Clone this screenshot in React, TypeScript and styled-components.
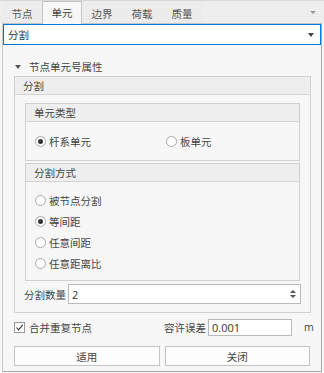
import React from "react";
import styled, { createGlobalStyle } from "styled-components";

const Global = createGlobalStyle`
  html, body { margin: 0; padding: 0; background: #f7f7f7; }
  * { box-sizing: border-box; }
  body { font-family: "Noto Sans CJK SC", "Microsoft YaHei", sans-serif; font-size: 10.5px; color: #444; }
`;

const Root = styled.div`
  width: 324px;
  height: 373px;
  display: flex;
  flex-direction: column;
  background: #f7f7f7;
`;

const TabBar = styled.div`
  height: 23px;
  display: flex;
  align-items: flex-end;
  padding: 0 2px;
  background: #eeeeee;
  border-top: 1px solid #d6d6d6;
  position: relative;
  z-index: 1;
`;

const Tab = styled.div<{ $active?: boolean }>`
  width: 40px;
  height: ${(p) => (p.$active ? "23px" : "21px")};
  display: flex;
  align-items: center;
  justify-content: center;
  color: ${(p) => (p.$active ? "#444" : "#555")};
  background: ${(p) => (p.$active ? "#f7f7f7" : "#ececec")};
  border: 1px solid ${(p) => (p.$active ? "#c4c4c4" : "transparent")};
  border-bottom: none;
  margin-bottom: ${(p) => (p.$active ? "-1px" : "0")};
  padding-bottom: ${(p) => (p.$active ? "2px" : "0")};
  margin-top: ${(p) => (p.$active ? "-2px" : "0")};
`;

const TabSpacer = styled.div`
  flex: 1;
`;

const TabMenu = styled.div`
  width: 14px;
  height: 21px;
  display: flex;
  align-items: center;
  justify-content: center;
  margin-right: 2px;
  &::after {
    content: "";
    border-left: 3px solid transparent;
    border-right: 3px solid transparent;
    border-top: 3px solid #9a9a9a;
  }
`;

const Panel = styled.div`
  flex: 1;
  margin: 0 2px 1px 2px;
  border: 1px solid #a9a9a9;
  border-top-color: #c4c4c4;
  border-left-color: #c8c8c8;
  display: flex;
  flex-direction: column;
`;

const Combo = styled.div`
  height: 21px;
  border: 1px solid #0078d7;
  background: #fff;
  display: flex;
  align-items: center;
  padding: 0 6px 0 4px;
  justify-content: space-between;
  color: #333;
`;

const DownArrow = styled.span`
  border-left: 3.5px solid transparent;
  border-right: 3.5px solid transparent;
  border-top: 4px solid #444;
`;

const SectionTitle = styled.div`
  height: 17px;
  margin-top: 13px;
  display: flex;
  align-items: center;
  padding-left: 12px;
  gap: 8px;
`;

const SmallArrow = styled.span`
  border-left: 3px solid transparent;
  border-right: 3px solid transparent;
  border-top: 4px solid #555;
`;

const Group = styled.div<{ $ml?: number; $mr?: number }>`
  margin-left: ${(p) => p.$ml ?? 10}px;
  margin-right: ${(p) => p.$mr ?? 10}px;
  border: 1px solid #d0d0d0;
  background: #f7f7f7;
  display: flex;
  flex-direction: column;
`;

const GroupHeader = styled.div<{ $h?: number }>`
  height: ${(p) => p.$h ?? 18}px;
  background: #eeeeee;
  border-bottom: 1px solid #d4d4d4;
  display: flex;
  align-items: center;
  padding-left: 8px;
`;

const GroupBody = styled.div<{ $pad?: string }>`
  display: flex;
  flex-direction: column;
  padding: ${(p) => p.$pad ?? "0"};
`;

const RadioRow = styled.div`
  display: flex;
  align-items: center;
  height: 21px;
`;

const RadioItem = styled.label<{ $w?: number }>`
  display: flex;
  align-items: center;
  gap: 3px;
  width: ${(p) => (p.$w ? `${p.$w}px` : "auto")};
`;

const RadioCircle = styled.span<{ $on?: boolean }>`
  width: 11px;
  height: 11px;
  border-radius: 50%;
  border: 1px solid #a8a8a8;
  background: #fff;
  display: flex;
  align-items: center;
  justify-content: center;
  &::after {
    content: "";
    width: 5px;
    height: 5px;
    border-radius: 50%;
    background: ${(p) => (p.$on ? "#333" : "transparent")};
  }
`;

const FieldRow = styled.div`
  display: flex;
  align-items: center;
  gap: 2px;
`;

const Input = styled.div<{ $w?: number }>`
  height: ${(p) => (p.$w ? 17 : 20)}px;
  flex: ${(p) => (p.$w ? "none" : "1")};
  width: ${(p) => (p.$w ? `${p.$w}px` : "auto")};
  border: 1px solid #b9b9b9;
  background: #fff;
  display: flex;
  align-items: center;
  justify-content: space-between;
  padding: 0 4px 0 3px;
  color: #333;
  font-family: "Segoe UI", "Open Sans", "Noto Sans", sans-serif;
  font-size: 11px;
`;

const Spin = styled.span`
  display: flex;
  flex-direction: column;
  gap: 2px;
  &::before, &::after {
    content: "";
    border-left: 3px solid transparent;
    border-right: 3px solid transparent;
  }
  &::before { border-bottom: 3px solid #555; }
  &::after { border-top: 3px solid #555; }
`;

const OptionsRow = styled.div`
  display: flex;
  align-items: center;
  height: 22px;
  margin-top: 3px;
  padding-left: 11px;
  padding-right: 9px;
`;

const Check = styled.span`
  width: 11px;
  height: 11px;
  border: 1px solid #9a9a9a;
  background: #fff;
  display: flex;
  align-items: center;
  justify-content: center;
`;

const CheckLabel = styled.label`
  display: flex;
  align-items: center;
  gap: 4px;
  flex: 1;
`;

const Unit = styled.span`
  margin-left: 12px;
  width: 8px;
  font-family: "Segoe UI", "Open Sans", "Noto Sans", sans-serif;
  font-size: 10.5px;
`;

const ButtonRow = styled.div`
  display: flex;
  gap: 5px;
  margin: 8px 11px 0 11px;
`;

const Button = styled.div`
  flex: 1;
  height: 20px;
  border: 1px solid #c4c4c4;
  background: #fdfdfd;
  display: flex;
  align-items: center;
  justify-content: center;
`;

const Radio = ({ on, label, w }: { on?: boolean; label: string; w?: number }) => (
  <RadioItem $w={w}>
    <RadioCircle $on={on} />
    {label}
  </RadioItem>
);

export default function App() {
  return (
    <Root>
      <Global />
      <TabBar>
        <Tab>节点</Tab>
        <Tab $active>单元</Tab>
        <Tab>边界</Tab>
        <Tab>荷载</Tab>
        <Tab>质量</Tab>
        <TabSpacer />
        <TabMenu />
      </TabBar>
      <Panel>
        <Combo>
          <span>分割</span>
          <DownArrow />
        </Combo>
        <SectionTitle>
          <SmallArrow />
          节点单元号属性
        </SectionTitle>
        <Group $ml={11} $mr={10} style={{ marginTop: 1 }}>
          <GroupHeader>分割</GroupHeader>
          <GroupBody $pad="8px 0 8px 0">
            <Group>
              <GroupHeader>单元类型</GroupHeader>
              <GroupBody $pad="9px 0 8px 9px">
                <RadioRow>
                  <Radio on label="杆系单元" w={131} />
                  <Radio label="板单元" />
                </RadioRow>
              </GroupBody>
            </Group>
            <Group style={{ marginTop: 2 }}>
              <GroupHeader>分割方式</GroupHeader>
              <GroupBody $pad="8px 0 6px 9px">
                <RadioRow><Radio label="被节点分割" /></RadioRow>
                <RadioRow><Radio on label="等间距" /></RadioRow>
                <RadioRow><Radio label="任意间距" /></RadioRow>
                <RadioRow><Radio label="任意距离比" /></RadioRow>
              </GroupBody>
            </Group>
            <FieldRow style={{ margin: "3px 9px 0 9px" }}>
              分割数量
              <Input>
                <span>2</span>
                <Spin />
              </Input>
            </FieldRow>
          </GroupBody>
        </Group>
        <OptionsRow>
          <CheckLabel>
            <Check>
              <svg width="9" height="9" viewBox="0 0 9 9">
                <path d="M1.5 4.5 L3.6 6.8 L7.8 1.8" fill="none" stroke="#333" strokeWidth="1.1" />
              </svg>
            </Check>
            合并重复节点
          </CheckLabel>
          <FieldRow>
            容许误差
            <Input $w={84}>0.001</Input>
          </FieldRow>
          <Unit>m</Unit>
        </OptionsRow>
        <ButtonRow>
          <Button>适用</Button>
          <Button>关闭</Button>
        </ButtonRow>
      </Panel>
    </Root>
  );
}
